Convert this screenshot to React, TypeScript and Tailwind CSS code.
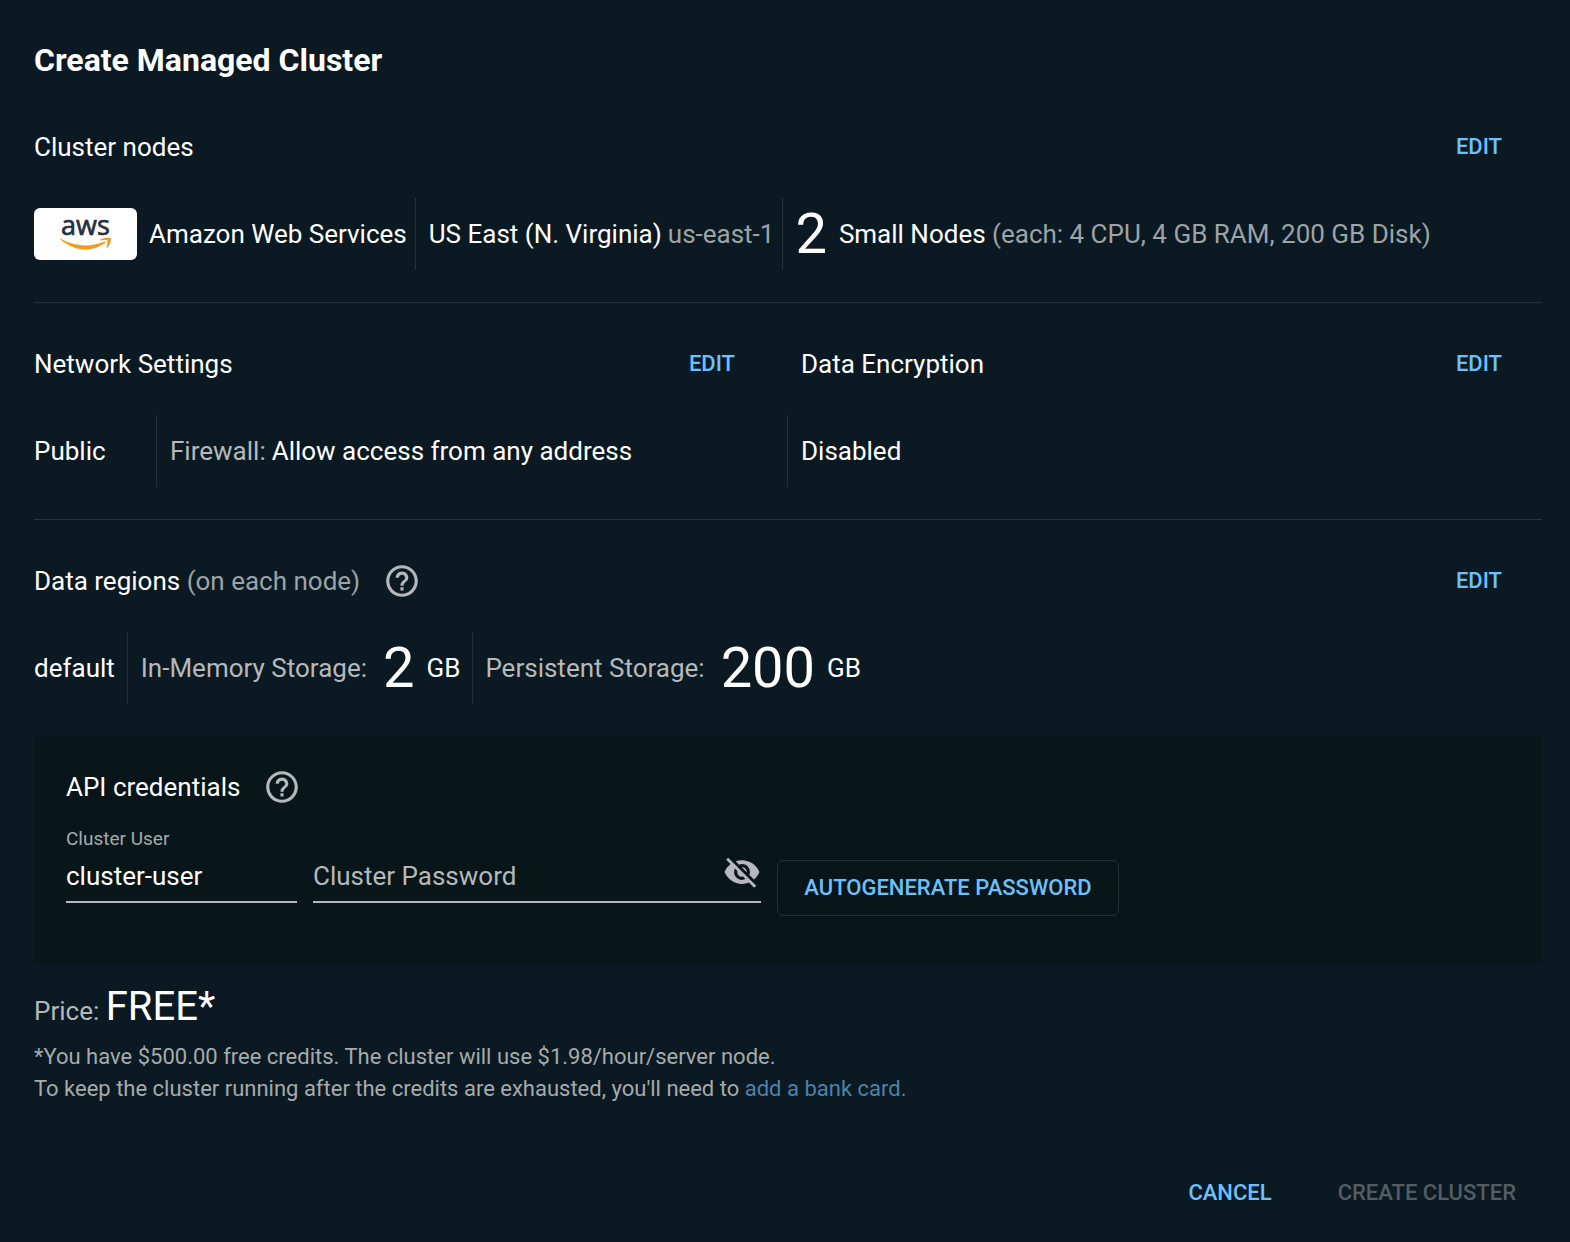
import { useState } from 'react';
import type { ReactNode } from 'react';
import { MdHelpOutline, MdVisibility, MdVisibilityOff } from 'react-icons/md';

function AwsLogo() {
  return (
    <svg
      width="103"
      height="52"
      viewBox="0 0 103 52"
      role="img"
      aria-label="AWS"
      className="shrink-0 overflow-visible"
    >
      <rect width="103" height="52" rx="6" fill="#fff" />
      <text
        x="51.5"
        y="27"
        textAnchor="middle"
        fontSize="27"
        fill="#252f3e"
        stroke="#252f3e"
        strokeWidth="0.7"
        fontFamily="'Open Sans', sans-serif"
      >
        aws
      </text>
      <path
        d="M26.600 30.600c7 4.300 15.600 6.800 24.600 6.800 6.200 0 13-1.300 19.200-3.900 1-.4 1.800.6.8 1.300-5.300 4-13.100 6.900-19.700 6.900-9.400 0-18-4.200-24.900-10.100-.7-.6-.4-1.400 0-1z"
        fill="#f7981f"
      />
      <path
        d="M73.300 32.500c-.8-1-5-.5-6.900-.2-.6.1-.7-.4-.1-.8 3.400-2.400 9.700-2 10.400-1.200.6.800-.2 6.900-3.700 9.500-.5.4-1 .2-.7-.3.700-1.700 1.800-5.800 1-7z"
        fill="#f7981f"
      />
    </svg>
  );
}

interface SectionHeaderProps {
  title: ReactNode;
  editLabel: string;
  help?: string;
}

function SectionHeader({ title, editLabel, help }: SectionHeaderProps) {
  return (
    <div className="flex h-[72px] items-center justify-between pt-0.5 pr-4">
      <div className="flex items-center gap-[23px]">
        <h2>{title}</h2>
        {help && <HelpButton label={help} />}
      </div>
      <button type="button" aria-label={editLabel} className="px-6 py-2 text-[22px] leading-7 font-medium text-[#6cc1fc]">
        EDIT
      </button>
    </div>
  );
}

function HelpButton({ label }: { label: string }) {
  return (
    <button type="button" aria-label={label} className="text-[#b5b9bc]">
      <MdHelpOutline size={38} />
    </button>
  );
}

function Muted({ children }: { children: ReactNode }) {
  return <span className="text-[#9da3a6]">{children}</span>;
}

const cell = 'flex h-[72px] items-center whitespace-nowrap';
const divided = 'border-r border-[#26323a]';

export default function App() {
  const [user, setUser] = useState('cluster-user');
  const [password, setPassword] = useState('');
  const [visible, setVisible] = useState(false);

  return (
    <main className="min-h-screen bg-[#0b1922] pr-7 pl-[34px] font-['Roboto',sans-serif] text-[26px] leading-8 text-white">
      <h1 className="pt-9 pb-0.5 text-[32px] leading-[48px] font-bold">Create Managed Cluster</h1>

      {/* Cluster nodes */}
      <section className="border-b border-[#26323a] pt-6 pb-8">
        <SectionHeader title="Cluster nodes" editLabel="Edit cluster nodes" />
        <div className="mt-4 flex">
          <div className={`${cell} ${divided} gap-3 pr-2`}>
            <AwsLogo />
            <span>Amazon Web Services</span>
          </div>
          <div className={`${cell} ${divided} gap-[6px] pr-2 pl-[13px]`}>
            <span>US East (N. Virginia)</span>
            <Muted>us-east-1</Muted>
          </div>
          <div className={`${cell} pl-3`}>
            <span className="mr-3 text-[56px]">2</span>
            <span>
              Small Nodes <Muted>(each: 4 CPU, 4 GB RAM, 200 GB Disk)</Muted>
            </span>
          </div>
        </div>
      </section>

      {/* Network and encryption */}
      <section className="border-b border-[#26323a] pt-6 pb-8">
        <div className="grid grid-cols-2 gap-[26px]">
          <SectionHeader title="Network Settings" editLabel="Edit network settings" />
          <SectionHeader title="Data Encryption" editLabel="Edit data encryption" />
        </div>
        <div className="mt-4 grid grid-cols-2">
          <div className={`${cell} ${divided}`}>
            <div className={`${cell} ${divided} min-w-[123px] pr-3`}>Public</div>
            <div className={`${cell} gap-[6px] pl-[13px]`}>
              <span className="text-[#b5b9bc]">Firewall:</span>
              <span>Allow access from any address</span>
            </div>
          </div>
          <div className={`${cell} pl-[13px]`}>Disabled</div>
        </div>
      </section>

      {/* Data regions */}
      <section className="pt-6 pb-8">
        <SectionHeader
          title={
            <>
              Data regions <Muted>(on each node)</Muted>
            </>
          }
          editLabel="Edit data regions"
          help="About data regions"
        />
        <div className="mt-4 flex">
          <div className={`${cell} ${divided} pr-3`}>default</div>
          <div className={`${cell} ${divided} pr-3 pl-[13px]`}>
            <span className="text-[#b5b9bc]">In-Memory Storage:</span>
            <span className="mr-3 ml-4 text-[56px]">2</span>
            <span>GB</span>
          </div>
          <div className={`${cell} pl-3`}>
            <span className="text-[#b5b9bc]">Persistent Storage:</span>
            <span className="mr-3 ml-4 text-[56px]">200</span>
            <span>GB</span>
          </div>
        </div>
      </section>

      {/* API credentials */}
      <section className="bg-[#081519] px-8 pt-6 pb-[47px]">
        <div className="flex h-[54px] items-center gap-[23px]">
          <h2>API credentials</h2>
          <HelpButton label="About API credentials" />
        </div>
        <div className="mt-[14px] flex items-end gap-4">
          <div className="mb-[13px] flex w-[231px] flex-col">
            <label htmlFor="cluster-user" className="text-[19px] leading-[22px] text-[#a5abad]">
              Cluster User
            </label>
            <input
              id="cluster-user"
              type="text"
              value={user}
              onChange={(e) => setUser(e.target.value)}
              className="h-[53px] w-full border-b-2 border-[#b5b9bc] bg-transparent outline-none"
            />
          </div>
          <div className="relative mb-[13px] flex h-[53px] w-[448px] items-center border-b-2 border-[#b5b9bc]">
            {/* Sits over the empty input, floats up once there is a value */}
            <label
              htmlFor="cluster-password"
              className={
                password
                  ? 'absolute bottom-full left-0 text-[19px] leading-[22px] text-[#a5abad]'
                  : 'pointer-events-none absolute inset-y-0 left-0 flex items-center text-[#b5b9bc]'
              }
            >
              Cluster Password
            </label>
            <input
              id="cluster-password"
              type={visible ? 'text' : 'password'}
              value={password}
              onChange={(e) => setPassword(e.target.value)}
              className="h-full min-w-0 flex-1 bg-transparent outline-none"
            />
            <button
              type="button"
              aria-label={visible ? 'Hide password' : 'Show password'}
              onClick={() => setVisible(!visible)}
              className="pb-2 text-[#b5b9bc]"
            >
              {visible ? <MdVisibility size={38} /> : <MdVisibilityOff size={38} />}
            </button>
          </div>
          <button
            type="button"
            className="h-14 w-[342px] rounded-md border border-[#242f34] text-[22px] font-medium whitespace-nowrap text-[#6cc1fc]"
          >
            AUTOGENERATE PASSWORD
          </button>
        </div>
      </section>

      {/* Price */}
      <p className="pt-5 leading-[48px]">
        <span className="text-[#b5b9bc]">Price:</span> <span className="text-[40px]">FREE*</span>
      </p>
      <p className="mt-[6px] text-[22px] text-[#a5abad]">
        *You have $500.00 free credits. The cluster will use $1.98/hour/server node.
        <br />
        To keep the cluster running after the credits are exhausted, you'll need to{' '}
        <a href="#billing" className="text-[#4a83ad]">
          add a bank card.
        </a>
      </p>

      <footer className="mt-[60px] flex justify-end gap-[18px] pr-0.5">
        <button type="button" className="h-14 px-6 text-[22px] font-medium text-[#6cc1fc]">
          CANCEL
        </button>
        <button type="button" disabled className="h-14 px-6 text-[22px] font-medium text-[#545d63]">
          CREATE CLUSTER
        </button>
      </footer>
    </main>
  );
}
